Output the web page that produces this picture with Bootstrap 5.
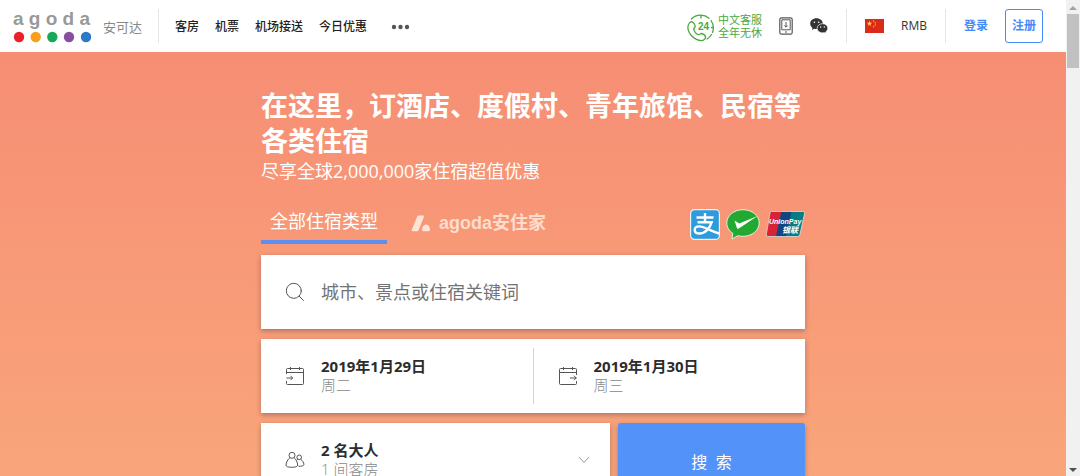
<!DOCTYPE html>
<html lang="zh-CN">
<head>
<meta charset="utf-8">
<meta name="viewport" content="width=device-width, initial-scale=1">
<title>agoda 安可达</title>
<link href="https://cdn.jsdelivr.net/npm/bootstrap@5.3.0/dist/css/bootstrap.min.css" rel="stylesheet">
<style>
  body { font-family: "Open Sans", "Noto Sans CJK SC", sans-serif; color: #333; }
  a { text-decoration: none; color: inherit; }
  svg { display: block; flex: none; }
  .page-shell { background: linear-gradient(#f68b73, #f9a57b); }
  .topbar { height: 52px; padding: 0 23px 0 13px; font-size: 12px; line-height: 18px; }
  .brand-name { font: bold 19px/20px "Liberation Sans", sans-serif; color: #999; white-space: nowrap; }
  .brand-cn { font-size: 13px; line-height: 18px; color: #888; padding-top: 2px; }
  .rule { width: 1px; height: 34px; background: #e6e6e6; margin: 0 1px; }
  .main-links { gap: 16px; font-weight: 500; color: #222; padding-top: 2px; }
  .tools { gap: 17px; }
  .support { font-size: 11px; line-height: 13px; color: #4aa83c; gap: 3px; }
  .text-brand { color: #488bf8; }
  .btn-join { width: 38px; height: 34px; padding: 0; font-size: 12px; font-weight: 700; color: #488bf8; border: 1px solid #488bf8; border-radius: 3px; }
  .hero { width: 100%; max-width: 544px; padding-top: 36px; }
  .hero h1 { font-size: 27px; line-height: 35px; font-weight: 700; margin: 0; }
  .hero-sub { font-size: 18px; line-height: 26px; margin: 0; }
  .tab-row { height: 40px; margin: 20px 0 11px; }
  .tab-btn { border: 0; background: none; color: #fff; font-size: 18px; line-height: 27px; padding: 4px 9px 5px; border-bottom: 4px solid transparent; }
  .tab-btn.active { border-color: #5c8ff0; }
  .tab-home { font-family: "Liberation Sans", "Noto Sans CJK SC", sans-serif; font-weight: 700; color: #fddccb; padding: 6px 12px 3px; }
  .pay-list { gap: 6px; }
  .panel { background: #fff; min-height: 74px; box-shadow: 0 2px 5px rgba(70,50,60,.4); }
  .field { border: 0; padding: 0 24px; gap: 16px; text-align: left; font-size: 15px; line-height: 19px; min-width: 0; }
  .half { background: none; flex: 1 1 0; }
  .field b { color: #2c2c2c; display: block; }
  .field .sub { color: #888; font-weight: 300; display: block; }
  .field input { border: 0; outline: 0; background: none; padding: 0; font-size: 18px; line-height: 28px; color: #555; min-width: 0; }
  .field input::placeholder { color: #737373; opacity: 1; }
  .stack { gap: 10px; }
  .split { width: 1px; background: #d5d5d5; margin: 9px 0; }
  .search-btn { width: 187px; border: 0; border-radius: 3px; background: #5392f9; color: #fff; font-size: 16px; padding-top: 4px; white-space: pre; box-shadow: 0 2px 5px rgba(70,50,60,.4); }
  .guest-field { padding-right: 20px; }
  .scroll-rail { width: 14px; background: #f1f1f1; padding: 6px 1px 4px; }
  .scroll-thumb { width: 12px; height: 54px; background: #c1c1c1; margin-top: 4px; }
</style>
</head>
<body>
<div class="d-flex vh-100 overflow-hidden">
  <div class="page-shell flex-grow-1 overflow-hidden">
    <header class="topbar bg-white d-flex align-items-center">
      <a href="#" class="d-flex align-items-center">
        <span>
          <span class="brand-name d-block">a g o d a</span>
          <svg width="78" height="14" viewBox="0 0 78 14"><circle cx="6" cy="8" r="5.2" fill="#ec2027"/><circle cx="22.700" cy="8" r="5.2" fill="#f8a01c"/><circle cx="39.300" cy="8" r="5.2" fill="#17a859"/><circle cx="56" cy="8" r="5.2" fill="#8550a0"/><circle cx="73" cy="8" r="5.2" fill="#2b7ac8"/></svg>
        </span>
        <span class="brand-cn ms-2 ps-1">安可达</span>
      </a>
      <span class="rule ms-3 me-3"></span>
      <nav class="main-links d-flex align-items-center">
        <a href="#">客房</a><a href="#">机票</a><a href="#">机场接送</a><a href="#">今日优惠</a>
        <a href="#" class="ms-2" aria-label="更多"><svg width="19" height="6" viewBox="0 0 19 6" fill="#555"><circle cx="3" cy="3" r="2.200"/><circle cx="9.500" cy="3" r="2.200"/><circle cx="16" cy="3" r="2.200"/></svg></a>
      </nav>
      <div class="tools d-flex align-items-center ms-auto">
        <a href="#" class="support d-flex align-items-center">
          <svg class="mt-1" width="28" height="28" viewBox="0 0 28 28" fill="none" stroke="#4aa83c" stroke-width="1.300" stroke-linecap="round">
            <path d="M4.500 5A13 13 0 0 1 22 4.200M24 6.500a13 13 0 0 1 1.500 12M24.500 20.500a13 13 0 0 1-4.500 4.500M14 1.700v2.300M24.500 13.500H26.500"/>
            <path d="M2 9.500c1-1.500 2.300-2 3.300-1.600 1.700.8 2.700 2.500 2.900 4.300.1 1.200-1.600 1.800-1.500 3 .3 2.200 2.600 5 4.800 5.500 1.400.3 2-1.500 3.200-1.200 1.800.5 3.600 2 3.900 3.500.2 1.800-2.200 3.600-4.300 3.600C7.500 26.600 1 19.500.9 13.500c0-1.500.4-3 1.100-4z"/>
            <text x="11" y="15.500" font-family="Liberation Sans, sans-serif" font-size="10" font-weight="700" fill="#4aa83c" stroke="none">24</text>
          </svg>
          <span>中文客服<br>全年无休</span>
        </a>
        <a href="#" aria-label="下载应用"><svg width="14" height="18" viewBox="0 0 14 18" fill="none" stroke="#555"><rect x=".8" y=".8" width="12.400" height="16.400" rx="1.800" stroke-width="1.200"/><path d="M2.800 2.800h8.400v10H2.800zM7 5v5M5.300 8.500 7 10.200l1.700-1.700M6 15h2"/></svg></a>
        <a href="#" aria-label="微信"><svg width="18" height="16" viewBox="0 0 18 16"><path d="M6.500.3C2.900.3.2 2.700.2 5.700c0 1.700.9 3.200 2.300 4.200L2 12l2.300-1.200c.7.2 1.500.3 2.200.3 3.500 0 6.300-2.400 6.300-5.400S10 .3 6.500.3z" fill="#333"/><path d="M12.500 5.700c-3 0-5.400 2-5.400 4.600s2.400 4.600 5.400 4.600c.6 0 1.200-.1 1.800-.3l1.900 1-.5-1.700c1.300-.9 2.100-2.100 2.100-3.600 0-2.600-2.400-4.600-5.300-4.600z" fill="#333" stroke="#fff" stroke-width=".7"/><g fill="#fff"><circle cx="4.400" cy="4.200" r=".8"/><circle cx="8.700" cy="4.200" r=".8"/><circle cx="10.700" cy="9" r=".7"/><circle cx="14.300" cy="9" r=".7"/></g></svg></a>
        <span class="rule"></span>
        <svg width="19" height="14" viewBox="0 0 19 14"><path fill="#dc2a19" d="M0 0h19v14H0z"/><path fill="#ffd83a" d="m4.500 1.800.7 1.900h2L5.600 4.900l.6 2-1.700-1.200-1.700 1.200.6-2L1.800 3.700h2z"/><g fill="#f9b72b"><circle cx="8.600" cy="2" r=".7"/><circle cx="10.200" cy="3.800" r=".7"/><circle cx="10.200" cy="6" r=".7"/><circle cx="8.600" cy="7.800" r=".7"/></g></svg>
        <a href="#">RMB</a>
        <span class="rule"></span>
        <a href="#" class="text-brand fw-bold">登录</a>
        <button type="button" class="btn btn-join">注册</button>
      </div>
    </header>

    <main class="hero mx-auto text-white">
      <h1>在这里，订酒店、度假村、青年旅馆、民宿等各类住宿</h1>
      <p class="hero-sub">尽享全球2,000,000家住宿超值优惠</p>
      <div class="tab-row d-flex align-items-center">
        <button type="button" class="tab-btn active ms-sm-0 me-1">全部住宿类型</button>
        <button type="button" class="tab-btn tab-home d-flex align-items-center gap-2 ms-2">
          <svg width="20" height="17" viewBox="0 0 20 17" fill="#fde3d3"><path d="M7.500.5H12a1 1 0 0 1 .9 1.400L7.500 15.300c-.2.600-.6.900-1.200.9H1.500c-.8 0-1.100-.5-.8-1.200L6.200 1.400c.2-.6.6-.9 1.300-.9zM15 9.500c2.200 0 4 2.200 4 5 0 1.200-.4 1.700-1.300 1.700h-5.400c-.8 0-1.200-.6-1.200-1.700 0-2.800 1.700-5 3.900-5z"/></svg>
          agoda安住家
        </button>
        <div class="pay-list d-flex align-items-center ms-auto">
          <svg width="30" height="31" viewBox="0 0 30 31"><rect x=".6" y=".6" width="28.800" height="29.800" rx="4" fill="#2e9bdc" stroke="#e6f1f5" stroke-width="1.200"/><g fill="none" stroke="#fff" stroke-width="2.400"><path d="M6.500 8.500h17M15 4v9M7.500 13.200h14.200C20 19 15 24.500 9.500 24.500c-3 0-4.800-1.400-4.800-3.600 0-2 1.800-3.500 4.600-3.500 4.700 0 10 4 19.700 7.100"/></g></svg>
          <svg width="34" height="31" viewBox="0 0 34 31"><path d="M17 .7C8 .7.8 6.600.8 14c0 4.200 2.300 7.900 6 10.300L6 30l5.800-3.300c1.600.4 3.400.6 5.200.6 9 0 16.200-5.900 16.200-13.300S26 .7 17 .7z" fill="#22a932" stroke="#e4eed9"/><path d="m8.500 11.500 4.700 3L31.500 7 12.800 19.500c-1 .6-1.600.3-2-.7z" fill="#fff"/></svg>
          <svg width="39" height="26" viewBox="0 0 39 26"><path d="M5.500.5h31a2 2 0 0 1 2 2.500l-4.600 20.500a2.500 2.500 0 0 1-2.500 2H2a2 2 0 0 1-1.600-2.500L4 2Q4.300.5 5.500.5z" fill="#087c84"/><path d="M5.500.5h10L10 25.500H2a2 2 0 0 1-1.600-2.500L4 2Q4.300.5 5.500.5z" fill="#d82236"/><path d="M15.500.5h10L20 25.500H10z" fill="#11467f"/><path d="M5.500.5h31a2 2 0 0 1 2 2.500l-4.600 20.500a2.500 2.500 0 0 1-2.500 2H2a2 2 0 0 1-1.600-2.500L4 2Q4.300.5 5.500.5z" fill="none" stroke="#e8dcd6" stroke-width=".8"/><g fill="#fff" font-weight="700" font-style="italic"><text x="3" y="12.500" font-family="Liberation Sans, sans-serif" font-size="7">UnionPay</text><text x="16" y="21.500" font-family="Noto Sans CJK SC, sans-serif" font-size="8">银联</text></g></svg>
        </div>
      </div>

      <form class="d-flex flex-column stack" onsubmit="return false">
        <label class="panel field d-flex align-items-center" for="place">
          <svg width="20" height="20" viewBox="0 0 20 20" fill="none" stroke="#555" stroke-linecap="round"><circle cx="8.800" cy="8.800" r="7.500"/><path d="m14.200 14.200 4.300 4.300"/></svg>
          <input id="place" type="text" class="flex-grow-1" placeholder="城市、景点或住宿关键词" aria-label="目的地">
        </label>
        <div class="panel d-flex">
          <button type="button" class="field half d-flex align-items-center">
            <svg width="20" height="20" viewBox="0 0 20 20" fill="none" stroke="#555"><path d="M1.500 8V3.500q0-1 1-1h15q1 0 1 1v14q0 1-1 1h-15q-1 0-1-1V15M1.500 6.500h17M5.500 1v3M14.500 1v3M1.500 12h6M5.500 9.800 7.700 12l-2.200 2.200"/></svg>
            <span><b>2019年1月29日</b><span class="sub">周二</span></span>
          </button>
          <span class="split"></span>
          <button type="button" class="field half d-flex align-items-center">
            <svg width="20" height="20" viewBox="0 0 20 20" fill="none" stroke="#555"><path d="M18.500 9V3.500q0-1-1-1h-15q-1 0-1 1v14q0 1 1 1h15q1 0 1-1V15M1.500 6.500h17M5.500 1v3M14.500 1v3M12 12h6.500M16 9.800l2.200 2.200-2.200 2.200"/></svg>
            <span><b>2019年1月30日</b><span class="sub">周三</span></span>
          </button>
        </div>
        <div class="d-flex gap-2">
          <button type="button" class="panel field guest-field d-flex align-items-center flex-grow-1">
            <svg width="20" height="20" viewBox="0 0 20 20" fill="none" stroke="#555"><circle cx="7" cy="5.300" r="3"/><path d="M5 7.700c-2.200 1.300-4 5-4 7.300 0 1.500 2 2.300 5.800 2.300s5.900-.8 5.900-2.300c0-2.300-1.700-6-3.700-7.300"/><circle cx="14.200" cy="7.300" r="2.300"/><path d="M11.700 10.200q.6-.7 1.200-1.100M15.700 9.300c1.900 1.200 3.200 3.500 3.200 5.200 0 1.300-2 1.900-5.400 1.700"/></svg>
            <span><b>2 名大人</b><span class="sub">1 间客房</span></span>
            <svg class="ms-auto" width="12" height="8" viewBox="0 0 12 8" fill="none" stroke="#999"><path d="m1 1 5 5.500L11 1"/></svg>
          </button>
          <button type="submit" class="search-btn">搜  索</button>
        </div>
      </form>
    </main>
  </div>
  <div class="scroll-rail d-flex flex-column align-items-center flex-shrink-0" aria-hidden="true">
    <svg width="8" height="4" viewBox="0 0 8 4"><path d="m0 4 4-4 4 4z" fill="#a3a3a3"/></svg>
    <span class="scroll-thumb"></span>
    <svg class="mt-auto" width="8" height="4" viewBox="0 0 8 4"><path d="m0 0 4 4 4-4z" fill="#505050"/></svg>
  </div>
</div>
<script src="https://cdn.jsdelivr.net/npm/bootstrap@5.3.0/dist/js/bootstrap.bundle.min.js"></script>
</body>
</html>
